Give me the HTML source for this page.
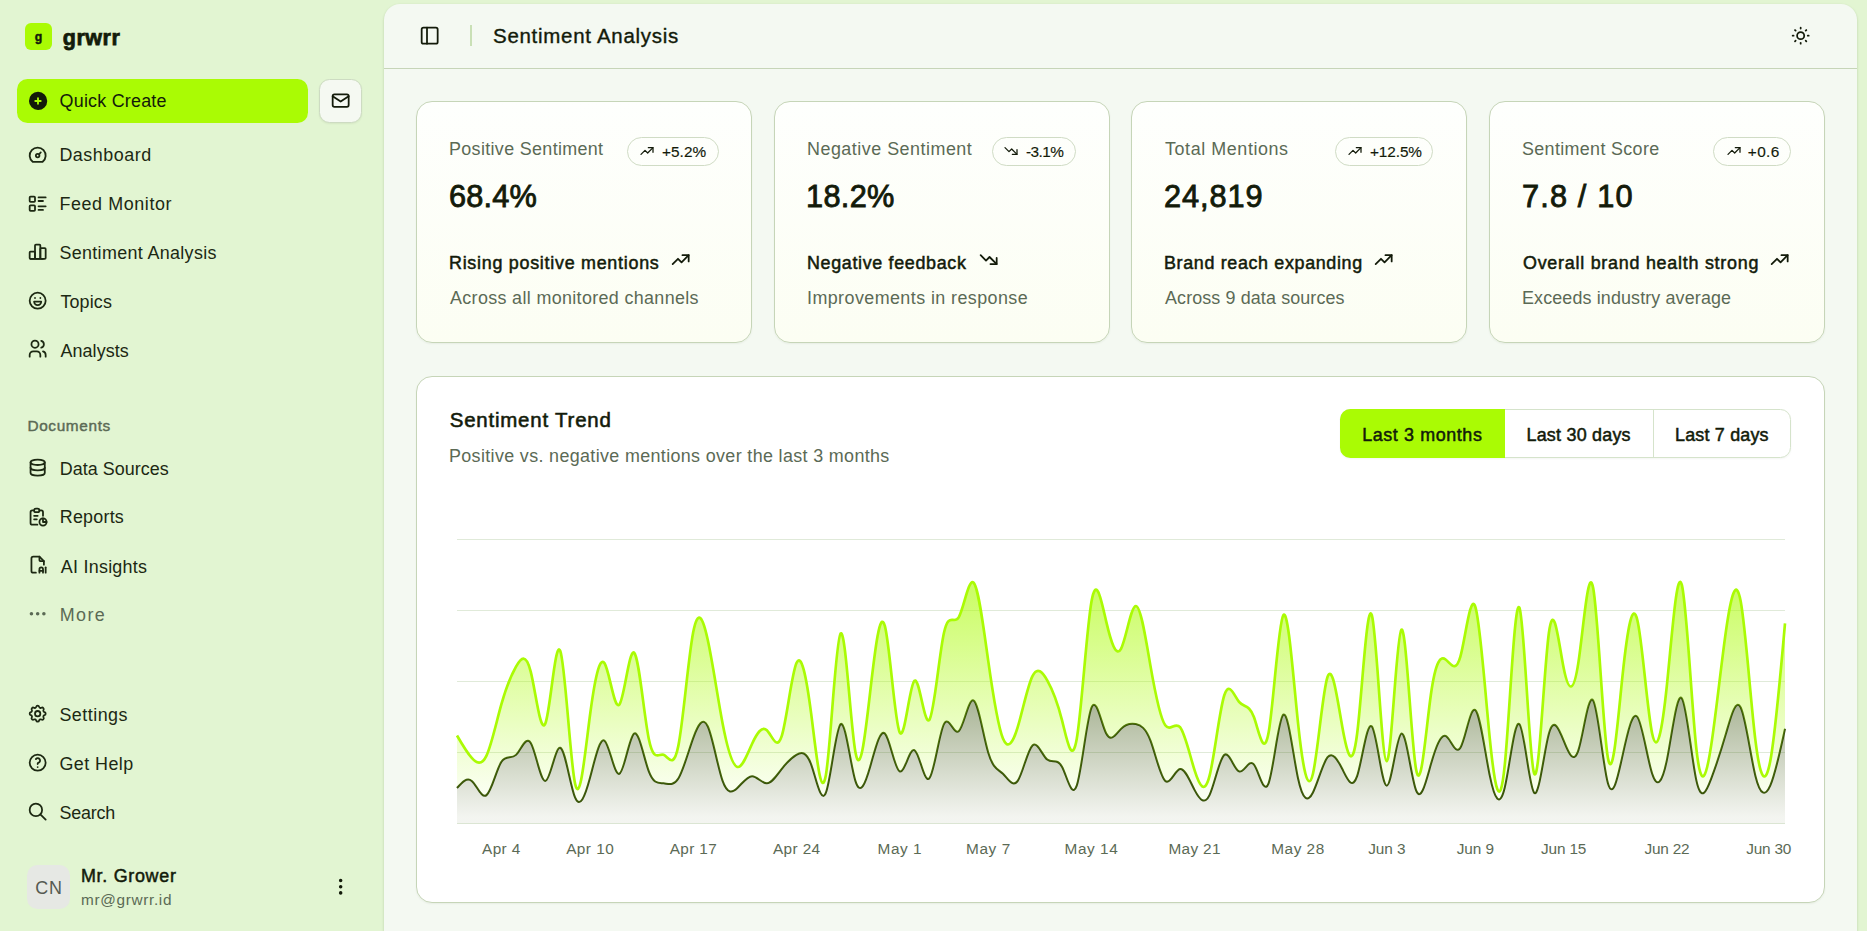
<!DOCTYPE html>
<html lang="en"><head><meta charset="utf-8"><title>grwrr - Sentiment Analysis</title>
<style>
html,body{margin:0;padding:0}
body{width:1867px;height:931px;overflow:hidden;position:relative;background:#e2f5d2;font-family:"Liberation Sans",sans-serif}
.t{position:absolute;white-space:nowrap}
.ic{position:absolute;overflow:visible}
</style></head><body>
<div style="position:absolute;left:384px;top:4px;width:1473px;height:960px;border-radius:16px;background:#f4f9f2;box-shadow:0 1px 3px rgba(40,60,20,.12),0 1px 2px rgba(40,60,20,.08)"></div>
<div style="position:absolute;left:384px;top:68px;width:1473px;height:1px;background:#c6d5b8"></div>
<div style="position:absolute;left:470px;top:25px;width:2px;height:21px;background:#c9e0b6"></div>
<div style="position:absolute;left:25px;top:23px;width:27px;height:27px;border-radius:6px;background:#aafb04"></div>
<div style="position:absolute;left:17px;top:79px;width:291px;height:44px;border-radius:10.5px;background:#aafb04"></div>
<div style="position:absolute;left:319px;top:79px;width:43px;height:44px;box-sizing:border-box;border-radius:10.5px;background:#f5f9f2;border:1px solid #cddbc2;box-shadow:0 1px 2px rgba(40,60,20,.07)"></div>
<div style="position:absolute;left:27px;top:865px;width:43px;height:43.5px;border-radius:10.5px;background:#e6e8e4"></div>
<div style="position:absolute;left:416px;top:101px;width:336px;height:242px;box-sizing:border-box;border-radius:16px;border:1px solid #c6d5b8;background:linear-gradient(to top,#fcfef3,#fefffd);box-shadow:0 1px 2px rgba(40,60,20,.06)"></div>
<div style="position:absolute;left:627.0px;top:137px;width:91.5px;height:29px;box-sizing:border-box;border-radius:15px;border:1px solid #d0dcc5"></div>
<div style="position:absolute;left:774px;top:101px;width:336px;height:242px;box-sizing:border-box;border-radius:16px;border:1px solid #c6d5b8;background:linear-gradient(to top,#fcfef3,#fefffd);box-shadow:0 1px 2px rgba(40,60,20,.06)"></div>
<div style="position:absolute;left:992.3px;top:137px;width:84.2px;height:29px;box-sizing:border-box;border-radius:15px;border:1px solid #d0dcc5"></div>
<div style="position:absolute;left:1131px;top:101px;width:336px;height:242px;box-sizing:border-box;border-radius:16px;border:1px solid #c6d5b8;background:linear-gradient(to top,#fcfef3,#fefffd);box-shadow:0 1px 2px rgba(40,60,20,.06)"></div>
<div style="position:absolute;left:1335.2px;top:137px;width:98.3px;height:29px;box-sizing:border-box;border-radius:15px;border:1px solid #d0dcc5"></div>
<div style="position:absolute;left:1489px;top:101px;width:336px;height:242px;box-sizing:border-box;border-radius:16px;border:1px solid #c6d5b8;background:linear-gradient(to top,#fcfef3,#fefffd);box-shadow:0 1px 2px rgba(40,60,20,.06)"></div>
<div style="position:absolute;left:1713.2px;top:137px;width:78.3px;height:29px;box-sizing:border-box;border-radius:15px;border:1px solid #d0dcc5"></div>
<div style="position:absolute;left:416px;top:376px;width:1409px;height:527px;box-sizing:border-box;border-radius:16px;border:1px solid #c6d5b8;background:#ffffff;box-shadow:0 1px 2px rgba(40,60,20,.06)"></div>
<div style="position:absolute;left:1340px;top:409px;width:451px;height:49px;box-sizing:border-box;border-radius:10.5px;border:1px solid #d5e3cb;box-shadow:0 1px 2px rgba(40,60,20,.05)"></div>
<div style="position:absolute;left:1340px;top:409px;width:164.5px;height:49px;border-radius:10.5px 0 0 10.5px;background:#aafb04"></div>
<div style="position:absolute;left:1653px;top:410px;width:1px;height:47px;background:#d5e3cb"></div>
<svg class="ic" style="left:0;top:0" width="1867" height="931" viewBox="0 0 1867 931">
<defs>
<linearGradient id="gp" x1="0" y1="0" x2="0" y2="1"><stop offset="5%" stop-color="#aafb04" stop-opacity="1"/><stop offset="95%" stop-color="#aafb04" stop-opacity="0.1"/></linearGradient>
<linearGradient id="gn" x1="0" y1="0" x2="0" y2="1"><stop offset="5%" stop-color="#38520a" stop-opacity="0.7"/><stop offset="95%" stop-color="#38520a" stop-opacity="0.1"/></linearGradient>
</defs>
<g><line x1="457" x2="1785" y1="539.50" y2="539.50" stroke="#e0ead9" stroke-width="1"/><line x1="457" x2="1785" y1="610.50" y2="610.50" stroke="#e0ead9" stroke-width="1"/><line x1="457" x2="1785" y1="681.50" y2="681.50" stroke="#e0ead9" stroke-width="1"/><line x1="457" x2="1785" y1="752.50" y2="752.50" stroke="#e0ead9" stroke-width="1"/><line x1="457" x2="1785" y1="823.50" y2="823.50" stroke="#e0ead9" stroke-width="1"/></g>
<path d="M457,788C461.92,782.39,466.84,776.78,471.76,780.9C476.67,785.02,481.59,798.88,486.51,795.1C491.43,791.32,496.35,769.89,501.27,761.97C506.19,754.04,511.1,759.62,516.02,754.87C520.94,750.12,525.86,735.04,530.78,743.03C535.7,751.02,540.61,782.08,545.53,780.9C550.45,779.72,555.37,746.29,560.29,747.77C565.21,749.24,570.13,785.61,575.04,797.47C579.96,809.32,584.88,796.65,589.8,778.53C594.72,760.42,599.64,736.85,604.56,740.67C609.47,744.48,614.39,775.68,619.31,773.8C624.23,771.92,629.15,736.98,634.07,733.57C638.99,730.15,643.9,758.27,648.82,771.43C653.74,784.59,658.66,782.8,663.58,783.27C668.5,783.74,673.41,786.47,678.33,778.53C683.25,770.59,688.17,751.98,693.09,738.3C698.01,724.62,702.93,715.87,707.84,726.47C712.76,737.06,717.68,767,722.6,780.9C727.52,794.8,732.44,792.67,737.36,788C742.27,783.33,747.19,776.13,752.11,776.17C757.03,776.2,761.95,783.47,766.87,783.27C771.79,783.06,776.7,775.38,781.62,769.07C786.54,762.75,791.46,757.8,796.38,754.87C801.3,751.94,806.21,751.03,811.13,764.33C816.05,777.64,820.97,805.16,825.89,792.73C830.81,780.3,835.73,727.91,840.64,724.1C845.56,720.29,850.48,765.04,855.4,780.9C860.32,796.76,865.24,783.71,870.16,766.7C875.07,749.69,879.99,728.72,884.91,733.57C889.83,738.42,894.75,769.1,899.67,771.43C904.59,773.77,909.5,747.77,914.42,750.13C919.34,752.5,924.26,783.22,929.18,778.53C934.1,773.85,939.01,733.75,943.93,724.1C948.85,714.45,953.77,735.25,958.69,731.2C963.61,727.15,968.53,698.25,973.44,700.43C978.36,702.62,983.28,735.89,988.2,752.5C993.12,769.11,998.04,769.07,1002.96,773.8C1007.87,778.53,1012.79,788.03,1017.71,780.9C1022.63,773.77,1027.55,750,1032.47,745.4C1037.39,740.8,1042.3,755.37,1047.22,759.6C1052.14,763.83,1057.06,757.73,1061.98,766.7C1066.9,775.67,1071.81,799.69,1076.73,785.63C1081.65,771.57,1086.57,719.42,1091.49,707.53C1096.41,695.65,1101.33,724.02,1106.24,733.57C1111.16,743.11,1116.08,733.83,1121,728.83C1125.92,723.84,1130.84,723.12,1135.76,724.1C1140.67,725.08,1145.59,727.74,1150.51,740.67C1155.43,753.59,1160.35,776.78,1165.27,780.9C1170.19,785.02,1175.1,770.06,1180.02,769.07C1184.94,768.07,1189.86,781.05,1194.78,790.37C1199.7,799.68,1204.61,805.35,1209.53,795.1C1214.45,784.85,1219.37,758.69,1224.29,754.87C1229.21,751.04,1234.13,769.54,1239.04,771.43C1243.96,773.33,1248.88,758.61,1253.8,764.33C1258.72,770.05,1263.64,796.21,1268.56,783.27C1273.47,770.32,1278.39,718.29,1283.31,714.63C1288.23,710.98,1293.15,755.71,1298.07,778.53C1302.99,801.35,1307.9,802.26,1312.82,792.73C1317.74,783.2,1322.66,763.24,1327.58,757.23C1332.5,751.23,1337.41,759.19,1342.33,769.07C1347.25,778.94,1352.17,790.73,1357.09,776.17C1362.01,761.6,1366.93,720.68,1371.84,726.47C1376.76,732.26,1381.68,784.76,1386.6,785.63C1391.52,786.5,1396.44,735.74,1401.36,733.57C1406.27,731.39,1411.19,777.81,1416.11,790.37C1421.03,802.92,1425.95,781.61,1430.87,764.33C1435.79,747.05,1440.7,733.8,1445.62,735.93C1450.54,738.07,1455.46,755.58,1460.38,747.77C1465.3,739.95,1470.21,706.79,1475.13,709.9C1480.05,713.01,1484.97,752.37,1489.89,776.17C1494.81,799.96,1499.73,808.18,1504.64,788C1509.56,767.82,1514.48,719.25,1519.4,724.1C1524.32,728.95,1529.24,787.21,1534.16,792.73C1539.07,798.25,1543.99,751.03,1548.91,733.57C1553.83,716.1,1558.75,728.39,1563.67,740.67C1568.59,752.94,1573.5,765.19,1578.42,750.13C1583.34,735.08,1588.26,692.71,1593.18,700.43C1598.1,708.15,1603.01,765.95,1607.93,783.27C1612.85,800.58,1617.77,777.41,1622.69,754.87C1627.61,732.32,1632.53,710.39,1637.44,717C1642.36,723.61,1647.28,758.76,1652.2,773.8C1657.12,788.84,1662.04,783.77,1666.96,759.6C1671.87,735.43,1676.79,692.18,1681.71,698.07C1686.63,703.95,1691.55,758.99,1696.47,780.9C1701.39,802.81,1706.3,791.6,1711.22,778.53C1716.14,765.46,1721.06,750.53,1725.98,733.57C1730.9,716.6,1735.81,697.59,1740.73,707.53C1745.65,717.47,1750.57,756.36,1755.49,776.17C1760.41,795.97,1765.33,796.7,1770.24,785.63C1775.16,774.56,1780.08,751.7,1785,728.83L1785,823.5L457,823.5Z" fill="url(#gn)" fill-opacity="0.6"/>
<path d="M457,788C461.92,782.39,466.84,776.78,471.76,780.9C476.67,785.02,481.59,798.88,486.51,795.1C491.43,791.32,496.35,769.89,501.27,761.97C506.19,754.04,511.1,759.62,516.02,754.87C520.94,750.12,525.86,735.04,530.78,743.03C535.7,751.02,540.61,782.08,545.53,780.9C550.45,779.72,555.37,746.29,560.29,747.77C565.21,749.24,570.13,785.61,575.04,797.47C579.96,809.32,584.88,796.65,589.8,778.53C594.72,760.42,599.64,736.85,604.56,740.67C609.47,744.48,614.39,775.68,619.31,773.8C624.23,771.92,629.15,736.98,634.07,733.57C638.99,730.15,643.9,758.27,648.82,771.43C653.74,784.59,658.66,782.8,663.58,783.27C668.5,783.74,673.41,786.47,678.33,778.53C683.25,770.59,688.17,751.98,693.09,738.3C698.01,724.62,702.93,715.87,707.84,726.47C712.76,737.06,717.68,767,722.6,780.9C727.52,794.8,732.44,792.67,737.36,788C742.27,783.33,747.19,776.13,752.11,776.17C757.03,776.2,761.95,783.47,766.87,783.27C771.79,783.06,776.7,775.38,781.62,769.07C786.54,762.75,791.46,757.8,796.38,754.87C801.3,751.94,806.21,751.03,811.13,764.33C816.05,777.64,820.97,805.16,825.89,792.73C830.81,780.3,835.73,727.91,840.64,724.1C845.56,720.29,850.48,765.04,855.4,780.9C860.32,796.76,865.24,783.71,870.16,766.7C875.07,749.69,879.99,728.72,884.91,733.57C889.83,738.42,894.75,769.1,899.67,771.43C904.59,773.77,909.5,747.77,914.42,750.13C919.34,752.5,924.26,783.22,929.18,778.53C934.1,773.85,939.01,733.75,943.93,724.1C948.85,714.45,953.77,735.25,958.69,731.2C963.61,727.15,968.53,698.25,973.44,700.43C978.36,702.62,983.28,735.89,988.2,752.5C993.12,769.11,998.04,769.07,1002.96,773.8C1007.87,778.53,1012.79,788.03,1017.71,780.9C1022.63,773.77,1027.55,750,1032.47,745.4C1037.39,740.8,1042.3,755.37,1047.22,759.6C1052.14,763.83,1057.06,757.73,1061.98,766.7C1066.9,775.67,1071.81,799.69,1076.73,785.63C1081.65,771.57,1086.57,719.42,1091.49,707.53C1096.41,695.65,1101.33,724.02,1106.24,733.57C1111.16,743.11,1116.08,733.83,1121,728.83C1125.92,723.84,1130.84,723.12,1135.76,724.1C1140.67,725.08,1145.59,727.74,1150.51,740.67C1155.43,753.59,1160.35,776.78,1165.27,780.9C1170.19,785.02,1175.1,770.06,1180.02,769.07C1184.94,768.07,1189.86,781.05,1194.78,790.37C1199.7,799.68,1204.61,805.35,1209.53,795.1C1214.45,784.85,1219.37,758.69,1224.29,754.87C1229.21,751.04,1234.13,769.54,1239.04,771.43C1243.96,773.33,1248.88,758.61,1253.8,764.33C1258.72,770.05,1263.64,796.21,1268.56,783.27C1273.47,770.32,1278.39,718.29,1283.31,714.63C1288.23,710.98,1293.15,755.71,1298.07,778.53C1302.99,801.35,1307.9,802.26,1312.82,792.73C1317.74,783.2,1322.66,763.24,1327.58,757.23C1332.5,751.23,1337.41,759.19,1342.33,769.07C1347.25,778.94,1352.17,790.73,1357.09,776.17C1362.01,761.6,1366.93,720.68,1371.84,726.47C1376.76,732.26,1381.68,784.76,1386.6,785.63C1391.52,786.5,1396.44,735.74,1401.36,733.57C1406.27,731.39,1411.19,777.81,1416.11,790.37C1421.03,802.92,1425.95,781.61,1430.87,764.33C1435.79,747.05,1440.7,733.8,1445.62,735.93C1450.54,738.07,1455.46,755.58,1460.38,747.77C1465.3,739.95,1470.21,706.79,1475.13,709.9C1480.05,713.01,1484.97,752.37,1489.89,776.17C1494.81,799.96,1499.73,808.18,1504.64,788C1509.56,767.82,1514.48,719.25,1519.4,724.1C1524.32,728.95,1529.24,787.21,1534.16,792.73C1539.07,798.25,1543.99,751.03,1548.91,733.57C1553.83,716.1,1558.75,728.39,1563.67,740.67C1568.59,752.94,1573.5,765.19,1578.42,750.13C1583.34,735.08,1588.26,692.71,1593.18,700.43C1598.1,708.15,1603.01,765.95,1607.93,783.27C1612.85,800.58,1617.77,777.41,1622.69,754.87C1627.61,732.32,1632.53,710.39,1637.44,717C1642.36,723.61,1647.28,758.76,1652.2,773.8C1657.12,788.84,1662.04,783.77,1666.96,759.6C1671.87,735.43,1676.79,692.18,1681.71,698.07C1686.63,703.95,1691.55,758.99,1696.47,780.9C1701.39,802.81,1706.3,791.6,1711.22,778.53C1716.14,765.46,1721.06,750.53,1725.98,733.57C1730.9,716.6,1735.81,697.59,1740.73,707.53C1745.65,717.47,1750.57,756.36,1755.49,776.17C1760.41,795.97,1765.33,796.7,1770.24,785.63C1775.16,774.56,1780.08,751.7,1785,728.83" fill="none" stroke="#38520a" stroke-width="2"/>
<path d="M457,735.46C461.92,743.96,466.84,752.46,471.76,757.94C476.67,763.43,481.59,765.89,486.51,755.58C491.43,745.26,496.35,722.17,501.27,704.69C506.19,687.21,511.1,675.34,516.02,666.59C520.94,657.84,525.86,652.2,530.78,671.8C535.7,691.39,540.61,736.22,545.53,722.92C550.45,709.61,555.37,638.16,560.29,650.97C565.21,663.78,570.13,760.84,575.04,783.5C579.96,806.17,584.88,754.44,589.8,716.76C594.72,679.09,599.64,655.48,604.56,663.28C609.47,671.08,614.39,710.29,619.31,704.69C624.23,699.09,629.15,648.68,634.07,652.63C638.99,656.58,643.9,714.89,648.82,739.01C653.74,763.13,658.66,753.06,663.58,754.87C668.5,756.68,673.41,770.37,678.33,745.87C683.25,721.38,688.17,658.7,693.09,632.75C698.01,606.8,702.93,617.58,707.84,640.32C712.76,663.06,717.68,697.76,722.6,723.39C727.52,749.02,732.44,765.59,737.36,766.94C742.27,768.28,747.19,754.4,752.11,743.74C757.03,733.09,761.95,725.67,766.87,730.25C771.79,734.84,776.7,751.44,781.62,736.41C786.54,721.37,791.46,674.71,796.38,663.28C801.3,651.84,806.21,675.64,811.13,713.45C816.05,751.26,820.97,803.09,825.89,774.98C830.81,746.88,835.73,638.84,840.64,633.46C845.56,628.07,850.48,725.33,855.4,752.03C860.32,778.72,865.24,734.85,870.16,692.15C875.07,649.45,879.99,607.94,884.91,626.12C889.83,644.3,894.75,722.19,899.67,732.38C904.59,742.58,909.5,685.09,914.42,680.79C919.34,676.49,924.26,725.37,929.18,720.08C934.1,714.79,939.01,655.33,943.93,632.98C948.85,610.64,953.77,625.4,958.69,617.36C963.61,609.33,968.53,578.48,973.44,582.57C978.36,586.66,983.28,625.68,988.2,660.67C993.12,695.66,998.04,726.62,1002.96,738.54C1007.87,750.45,1012.79,743.32,1017.71,727.18C1022.63,711.04,1027.55,685.89,1032.47,676.06C1037.39,666.22,1042.3,671.71,1047.22,680.32C1052.14,688.93,1057.06,700.66,1061.98,720.08C1066.9,739.49,1071.81,766.58,1076.73,739.01C1081.65,711.44,1086.57,629.22,1091.49,601.51C1096.41,573.8,1101.33,600.6,1106.24,621.62C1111.16,642.64,1116.08,657.88,1121,648.84C1125.92,639.8,1130.84,606.49,1135.76,606C1140.67,605.52,1145.59,637.86,1150.51,666.12C1155.43,694.37,1160.35,718.55,1165.27,725.28C1170.19,732.02,1175.1,721.31,1180.02,727.18C1184.94,733.05,1189.86,755.49,1194.78,770.96C1199.7,786.43,1204.61,794.91,1209.53,775.93C1214.45,756.95,1219.37,710.49,1224.29,695.23C1229.21,679.96,1234.13,695.89,1239.04,701.85C1243.96,707.81,1248.88,703.8,1253.8,716.76C1258.72,729.72,1263.64,759.65,1268.56,732.86C1273.47,706.06,1278.39,622.54,1283.31,615.23C1288.23,607.93,1293.15,676.84,1298.07,723.39C1302.99,769.94,1307.9,794.13,1312.82,774.27C1317.74,754.41,1322.66,690.5,1327.58,676.77C1332.5,663.03,1337.41,699.47,1342.33,726.94C1347.25,754.41,1352.17,772.92,1357.09,734.04C1362.01,695.16,1366.93,598.88,1371.84,615.23C1376.76,631.59,1381.68,760.58,1386.6,761.26C1391.52,761.94,1396.44,634.31,1401.36,629.67C1406.27,625.03,1411.19,743.37,1416.11,769.54C1421.03,795.71,1425.95,729.7,1430.87,694.75C1435.79,659.81,1440.7,655.92,1445.62,659.49C1450.54,663.06,1455.46,674.07,1460.38,656.65C1465.3,639.23,1470.21,593.36,1475.13,606.24C1480.05,619.12,1484.97,690.76,1489.89,739.48C1494.81,788.21,1499.73,814.03,1504.64,766.23C1509.56,718.43,1514.48,597,1519.4,607.66C1524.32,618.32,1529.24,761.05,1534.16,773.56C1539.07,786.08,1543.99,668.36,1548.91,632.75C1553.83,597.13,1558.75,643.6,1563.67,668.01C1568.59,692.42,1573.5,694.76,1578.42,662.33C1583.34,629.9,1588.26,562.7,1593.18,588.02C1598.1,613.33,1603.01,731.17,1607.93,757.94C1612.85,784.72,1617.77,720.44,1622.69,674.16C1627.61,627.89,1632.53,599.62,1637.44,620.44C1642.36,641.26,1647.28,711.15,1652.2,733.8C1657.12,756.45,1662.04,731.85,1666.96,684.58C1671.87,637.3,1676.79,567.36,1681.71,584.47C1686.63,601.58,1691.55,705.75,1696.47,749.66C1701.39,793.57,1706.3,777.23,1711.22,745.16C1716.14,713.1,1721.06,665.3,1725.98,630.85C1730.9,596.41,1735.81,575.31,1740.73,601.51C1745.65,627.71,1750.57,701.21,1755.49,740.9C1760.41,780.6,1765.33,786.49,1770.24,761.26C1775.16,736.02,1780.08,679.65,1785,623.28L1785,728.83C1780.08,751.7,1775.16,774.56,1770.24,785.63C1765.33,796.7,1760.41,795.97,1755.49,776.17C1750.57,756.36,1745.65,717.47,1740.73,707.53C1735.81,697.59,1730.9,716.6,1725.98,733.57C1721.06,750.53,1716.14,765.46,1711.22,778.53C1706.3,791.6,1701.39,802.81,1696.47,780.9C1691.55,758.99,1686.63,703.95,1681.71,698.07C1676.79,692.18,1671.87,735.43,1666.96,759.6C1662.04,783.77,1657.12,788.84,1652.2,773.8C1647.28,758.76,1642.36,723.61,1637.44,717C1632.53,710.39,1627.61,732.32,1622.69,754.87C1617.77,777.41,1612.85,800.58,1607.93,783.27C1603.01,765.95,1598.1,708.15,1593.18,700.43C1588.26,692.71,1583.34,735.08,1578.42,750.13C1573.5,765.19,1568.59,752.94,1563.67,740.67C1558.75,728.39,1553.83,716.1,1548.91,733.57C1543.99,751.03,1539.07,798.25,1534.16,792.73C1529.24,787.21,1524.32,728.95,1519.4,724.1C1514.48,719.25,1509.56,767.82,1504.64,788C1499.73,808.18,1494.81,799.96,1489.89,776.17C1484.97,752.37,1480.05,713.01,1475.13,709.9C1470.21,706.79,1465.3,739.95,1460.38,747.77C1455.46,755.58,1450.54,738.07,1445.62,735.93C1440.7,733.8,1435.79,747.05,1430.87,764.33C1425.95,781.61,1421.03,802.92,1416.11,790.37C1411.19,777.81,1406.27,731.39,1401.36,733.57C1396.44,735.74,1391.52,786.5,1386.6,785.63C1381.68,784.76,1376.76,732.26,1371.84,726.47C1366.93,720.68,1362.01,761.6,1357.09,776.17C1352.17,790.73,1347.25,778.94,1342.33,769.07C1337.41,759.19,1332.5,751.23,1327.58,757.23C1322.66,763.24,1317.74,783.2,1312.82,792.73C1307.9,802.26,1302.99,801.35,1298.07,778.53C1293.15,755.71,1288.23,710.98,1283.31,714.63C1278.39,718.29,1273.47,770.32,1268.56,783.27C1263.64,796.21,1258.72,770.05,1253.8,764.33C1248.88,758.61,1243.96,773.33,1239.04,771.43C1234.13,769.54,1229.21,751.04,1224.29,754.87C1219.37,758.69,1214.45,784.85,1209.53,795.1C1204.61,805.35,1199.7,799.68,1194.78,790.37C1189.86,781.05,1184.94,768.07,1180.02,769.07C1175.1,770.06,1170.19,785.02,1165.27,780.9C1160.35,776.78,1155.43,753.59,1150.51,740.67C1145.59,727.74,1140.67,725.08,1135.76,724.1C1130.84,723.12,1125.92,723.84,1121,728.83C1116.08,733.83,1111.16,743.11,1106.24,733.57C1101.33,724.02,1096.41,695.65,1091.49,707.53C1086.57,719.42,1081.65,771.57,1076.73,785.63C1071.81,799.69,1066.9,775.67,1061.98,766.7C1057.06,757.73,1052.14,763.83,1047.22,759.6C1042.3,755.37,1037.39,740.8,1032.47,745.4C1027.55,750,1022.63,773.77,1017.71,780.9C1012.79,788.03,1007.87,778.53,1002.96,773.8C998.04,769.07,993.12,769.11,988.2,752.5C983.28,735.89,978.36,702.62,973.44,700.43C968.53,698.25,963.61,727.15,958.69,731.2C953.77,735.25,948.85,714.45,943.93,724.1C939.01,733.75,934.1,773.85,929.18,778.53C924.26,783.22,919.34,752.5,914.42,750.13C909.5,747.77,904.59,773.77,899.67,771.43C894.75,769.1,889.83,738.42,884.91,733.57C879.99,728.72,875.07,749.69,870.16,766.7C865.24,783.71,860.32,796.76,855.4,780.9C850.48,765.04,845.56,720.29,840.64,724.1C835.73,727.91,830.81,780.3,825.89,792.73C820.97,805.16,816.05,777.64,811.13,764.33C806.21,751.03,801.3,751.94,796.38,754.87C791.46,757.8,786.54,762.75,781.62,769.07C776.7,775.38,771.79,783.06,766.87,783.27C761.95,783.47,757.03,776.2,752.11,776.17C747.19,776.13,742.27,783.33,737.36,788C732.44,792.67,727.52,794.8,722.6,780.9C717.68,767,712.76,737.06,707.84,726.47C702.93,715.87,698.01,724.62,693.09,738.3C688.17,751.98,683.25,770.59,678.33,778.53C673.41,786.47,668.5,783.74,663.58,783.27C658.66,782.8,653.74,784.59,648.82,771.43C643.9,758.27,638.99,730.15,634.07,733.57C629.15,736.98,624.23,771.92,619.31,773.8C614.39,775.68,609.47,744.48,604.56,740.67C599.64,736.85,594.72,760.42,589.8,778.53C584.88,796.65,579.96,809.32,575.04,797.47C570.13,785.61,565.21,749.24,560.29,747.77C555.37,746.29,550.45,779.72,545.53,780.9C540.61,782.08,535.7,751.02,530.78,743.03C525.86,735.04,520.94,750.12,516.02,754.87C511.1,759.62,506.19,754.04,501.27,761.97C496.35,769.89,491.43,791.32,486.51,795.1C481.59,798.88,476.67,785.02,471.76,780.9C466.84,776.78,461.92,782.39,457,788Z" fill="url(#gp)" fill-opacity="0.6"/>
<path d="M457,735.46C461.92,743.96,466.84,752.46,471.76,757.94C476.67,763.43,481.59,765.89,486.51,755.58C491.43,745.26,496.35,722.17,501.27,704.69C506.19,687.21,511.1,675.34,516.02,666.59C520.94,657.84,525.86,652.2,530.78,671.8C535.7,691.39,540.61,736.22,545.53,722.92C550.45,709.61,555.37,638.16,560.29,650.97C565.21,663.78,570.13,760.84,575.04,783.5C579.96,806.17,584.88,754.44,589.8,716.76C594.72,679.09,599.64,655.48,604.56,663.28C609.47,671.08,614.39,710.29,619.31,704.69C624.23,699.09,629.15,648.68,634.07,652.63C638.99,656.58,643.9,714.89,648.82,739.01C653.74,763.13,658.66,753.06,663.58,754.87C668.5,756.68,673.41,770.37,678.33,745.87C683.25,721.38,688.17,658.7,693.09,632.75C698.01,606.8,702.93,617.58,707.84,640.32C712.76,663.06,717.68,697.76,722.6,723.39C727.52,749.02,732.44,765.59,737.36,766.94C742.27,768.28,747.19,754.4,752.11,743.74C757.03,733.09,761.95,725.67,766.87,730.25C771.79,734.84,776.7,751.44,781.62,736.41C786.54,721.37,791.46,674.71,796.38,663.28C801.3,651.84,806.21,675.64,811.13,713.45C816.05,751.26,820.97,803.09,825.89,774.98C830.81,746.88,835.73,638.84,840.64,633.46C845.56,628.07,850.48,725.33,855.4,752.03C860.32,778.72,865.24,734.85,870.16,692.15C875.07,649.45,879.99,607.94,884.91,626.12C889.83,644.3,894.75,722.19,899.67,732.38C904.59,742.58,909.5,685.09,914.42,680.79C919.34,676.49,924.26,725.37,929.18,720.08C934.1,714.79,939.01,655.33,943.93,632.98C948.85,610.64,953.77,625.4,958.69,617.36C963.61,609.33,968.53,578.48,973.44,582.57C978.36,586.66,983.28,625.68,988.2,660.67C993.12,695.66,998.04,726.62,1002.96,738.54C1007.87,750.45,1012.79,743.32,1017.71,727.18C1022.63,711.04,1027.55,685.89,1032.47,676.06C1037.39,666.22,1042.3,671.71,1047.22,680.32C1052.14,688.93,1057.06,700.66,1061.98,720.08C1066.9,739.49,1071.81,766.58,1076.73,739.01C1081.65,711.44,1086.57,629.22,1091.49,601.51C1096.41,573.8,1101.33,600.6,1106.24,621.62C1111.16,642.64,1116.08,657.88,1121,648.84C1125.92,639.8,1130.84,606.49,1135.76,606C1140.67,605.52,1145.59,637.86,1150.51,666.12C1155.43,694.37,1160.35,718.55,1165.27,725.28C1170.19,732.02,1175.1,721.31,1180.02,727.18C1184.94,733.05,1189.86,755.49,1194.78,770.96C1199.7,786.43,1204.61,794.91,1209.53,775.93C1214.45,756.95,1219.37,710.49,1224.29,695.23C1229.21,679.96,1234.13,695.89,1239.04,701.85C1243.96,707.81,1248.88,703.8,1253.8,716.76C1258.72,729.72,1263.64,759.65,1268.56,732.86C1273.47,706.06,1278.39,622.54,1283.31,615.23C1288.23,607.93,1293.15,676.84,1298.07,723.39C1302.99,769.94,1307.9,794.13,1312.82,774.27C1317.74,754.41,1322.66,690.5,1327.58,676.77C1332.5,663.03,1337.41,699.47,1342.33,726.94C1347.25,754.41,1352.17,772.92,1357.09,734.04C1362.01,695.16,1366.93,598.88,1371.84,615.23C1376.76,631.59,1381.68,760.58,1386.6,761.26C1391.52,761.94,1396.44,634.31,1401.36,629.67C1406.27,625.03,1411.19,743.37,1416.11,769.54C1421.03,795.71,1425.95,729.7,1430.87,694.75C1435.79,659.81,1440.7,655.92,1445.62,659.49C1450.54,663.06,1455.46,674.07,1460.38,656.65C1465.3,639.23,1470.21,593.36,1475.13,606.24C1480.05,619.12,1484.97,690.76,1489.89,739.48C1494.81,788.21,1499.73,814.03,1504.64,766.23C1509.56,718.43,1514.48,597,1519.4,607.66C1524.32,618.32,1529.24,761.05,1534.16,773.56C1539.07,786.08,1543.99,668.36,1548.91,632.75C1553.83,597.13,1558.75,643.6,1563.67,668.01C1568.59,692.42,1573.5,694.76,1578.42,662.33C1583.34,629.9,1588.26,562.7,1593.18,588.02C1598.1,613.33,1603.01,731.17,1607.93,757.94C1612.85,784.72,1617.77,720.44,1622.69,674.16C1627.61,627.89,1632.53,599.62,1637.44,620.44C1642.36,641.26,1647.28,711.15,1652.2,733.8C1657.12,756.45,1662.04,731.85,1666.96,684.58C1671.87,637.3,1676.79,567.36,1681.71,584.47C1686.63,601.58,1691.55,705.75,1696.47,749.66C1701.39,793.57,1706.3,777.23,1711.22,745.16C1716.14,713.1,1721.06,665.3,1725.98,630.85C1730.9,596.41,1735.81,575.31,1740.73,601.51C1745.65,627.71,1750.57,701.21,1755.49,740.9C1760.41,780.6,1765.33,786.49,1770.24,761.26C1775.16,736.02,1780.08,679.65,1785,623.28" fill="none" stroke="#aafb04" stroke-width="2.67"/>
</svg>
<svg class="ic" style="left:27.00px;top:90.00px" width="22.00" height="22.00" viewBox="0 0 24 24" fill="#131b0a" stroke="none"><path d="M4.929 4.929a10 10 0 1 1 14.141 14.141a10 10 0 0 1 -14.14 -14.14zm8.071 4.071a1 1 0 1 0 -2 0v2h-2a1 1 0 1 0 0 2h2v2a1 1 0 1 0 2 0v-2h2a1 1 0 1 0 0 -2h-2v-2z"/></svg>
<svg class="ic" style="left:329.83px;top:90.34px" width="21.33" height="21.33" viewBox="0 0 24 24" fill="none" stroke="#131b0a" stroke-width="2" stroke-linecap="round" stroke-linejoin="round"><path d="M3 7a2 2 0 0 1 2 -2h14a2 2 0 0 1 2 2v10a2 2 0 0 1 -2 2h-14a2 2 0 0 1 -2 -2v-10z"/><path d="M3 7l9 6l9 -6"/></svg>
<svg class="ic" style="left:27.23px;top:144.14px" width="21.33" height="21.33" viewBox="0 0 24 24" fill="none" stroke="#1c2812" stroke-width="2" stroke-linecap="round" stroke-linejoin="round"><path d="M12 13m-2 0a2 2 0 1 0 4 0a2 2 0 1 0 -4 0"/><path d="M13.45 11.55l2.05 -2.05"/><path d="M6.4 20a9 9 0 1 1 11.2 0z"/></svg>
<svg class="ic" style="left:27.23px;top:193.34px" width="21.33" height="21.33" viewBox="0 0 24 24" fill="none" stroke="#1c2812" stroke-width="2" stroke-linecap="round" stroke-linejoin="round"><path d="M13 5h8"/><path d="M13 9h5"/><path d="M13 15h8"/><path d="M13 19h5"/><path d="M3 5a1 1 0 0 1 1 -1h4a1 1 0 0 1 1 1v4a1 1 0 0 1 -1 1h-4a1 1 0 0 1 -1 -1z"/><path d="M3 15a1 1 0 0 1 1 -1h4a1 1 0 0 1 1 1v4a1 1 0 0 1 -1 1h-4a1 1 0 0 1 -1 -1z"/></svg>
<svg class="ic" style="left:27.23px;top:241.34px" width="21.33" height="21.33" viewBox="0 0 24 24" fill="none" stroke="#1c2812" stroke-width="2" stroke-linecap="round" stroke-linejoin="round"><path d="M3 13a1 1 0 0 1 1 -1h4a1 1 0 0 1 1 1v6a1 1 0 0 1 -1 1h-4a1 1 0 0 1 -1 -1z"/><path d="M15 9a1 1 0 0 1 1 -1h4a1 1 0 0 1 1 1v10a1 1 0 0 1 -1 1h-4a1 1 0 0 1 -1 -1z"/><path d="M9 5a1 1 0 0 1 1 -1h4a1 1 0 0 1 1 1v14a1 1 0 0 1 -1 1h-4a1 1 0 0 1 -1 -1z"/><path d="M4 20h14"/></svg>
<svg class="ic" style="left:27.23px;top:290.23px" width="21.33" height="21.33" viewBox="0 0 24 24" fill="none" stroke="#1c2812" stroke-width="2" stroke-linecap="round" stroke-linejoin="round"><path d="M12 12m-9 0a9 9 0 1 0 18 0a9 9 0 1 0 -18 0"/><path d="M9 9l.01 0"/><path d="M15 9l.01 0"/><path d="M8 13a4 4 0 1 0 8 0h-8"/></svg>
<svg class="ic" style="left:27.23px;top:338.03px" width="21.33" height="21.33" viewBox="0 0 24 24" fill="none" stroke="#1c2812" stroke-width="2" stroke-linecap="round" stroke-linejoin="round"><path d="M9 7m-4 0a4 4 0 1 0 8 0a4 4 0 1 0 -8 0"/><path d="M3 21v-2a4 4 0 0 1 4 -4h4a4 4 0 0 1 4 4v2"/><path d="M16 3.13a4 4 0 0 1 0 7.75"/><path d="M21 21v-2a4 4 0 0 0 -3 -3.85"/></svg>
<svg class="ic" style="left:27.23px;top:457.03px" width="21.33" height="21.33" viewBox="0 0 24 24" fill="none" stroke="#1c2812" stroke-width="2" stroke-linecap="round" stroke-linejoin="round"><path d="M12 6m-8 0a8 3 0 1 0 16 0a8 3 0 1 0 -16 0"/><path d="M4 6v6a8 3 0 0 0 16 0v-6"/><path d="M4 12v6a8 3 0 0 0 16 0v-6"/></svg>
<svg class="ic" style="left:27.23px;top:506.33px" width="21.33" height="21.33" viewBox="0 0 24 24" fill="none" stroke="#1c2812" stroke-width="2" stroke-linecap="round" stroke-linejoin="round"><path d="M8 5h-2a2 2 0 0 0 -2 2v12a2 2 0 0 0 2 2h5.697"/><path d="M18 14v4h4"/><path d="M18 11v-4a2 2 0 0 0 -2 -2h-2"/><path d="M8 5a2 2 0 0 1 2 -2h2a2 2 0 0 1 2 2a2 2 0 0 1 -2 2h-2a2 2 0 0 1 -2 -2z"/><path d="M18 18m-4 0a4 4 0 1 0 8 0a4 4 0 1 0 -8 0"/><path d="M8 11h4"/><path d="M8 15h3"/></svg>
<svg class="ic" style="left:27.23px;top:554.34px" width="21.33" height="21.33" viewBox="0 0 24 24" fill="none" stroke="#1c2812" stroke-width="2" stroke-linecap="round" stroke-linejoin="round"><path d="M14 3v4a1 1 0 0 0 1 1h4"/><path d="M10 21h-3a2 2 0 0 1 -2 -2v-14a2 2 0 0 1 2 -2h7l5 5v4"/><path d="M14 21v-4a2 2 0 1 1 4 0v4"/><path d="M14 19h4"/><path d="M21 15v6"/></svg>
<svg class="ic" style="left:27.23px;top:602.74px" width="21.33" height="21.33" viewBox="0 0 24 24" fill="none" stroke="#5b6a55" stroke-width="2" stroke-linecap="round" stroke-linejoin="round"><path d="M5 12m-1 0a1 1 0 1 0 2 0a1 1 0 1 0 -2 0"/><path d="M12 12m-1 0a1 1 0 1 0 2 0a1 1 0 1 0 -2 0"/><path d="M19 12m-1 0a1 1 0 1 0 2 0a1 1 0 1 0 -2 0"/></svg>
<svg class="ic" style="left:27.23px;top:703.13px" width="21.33" height="21.33" viewBox="0 0 24 24" fill="none" stroke="#1c2812" stroke-width="2" stroke-linecap="round" stroke-linejoin="round"><path d="M10.325 4.317c.426 -1.756 2.924 -1.756 3.35 0a1.724 1.724 0 0 0 2.573 1.066c1.543 -.94 3.31 .826 2.37 2.37a1.724 1.724 0 0 0 1.065 2.572c1.756 .426 1.756 2.924 0 3.35a1.724 1.724 0 0 0 -1.066 2.573c.94 1.543 -.826 3.31 -2.37 2.37a1.724 1.724 0 0 0 -2.572 1.065c-.426 1.756 -2.924 1.756 -3.35 0a1.724 1.724 0 0 0 -2.573 -1.066c-1.543 .94 -3.31 -.826 -2.37 -2.37a1.724 1.724 0 0 0 -1.065 -2.572c-1.756 -.426 -1.756 -2.924 0 -3.35a1.724 1.724 0 0 0 1.066 -2.573c-.94 -1.543 .826 -3.31 2.37 -2.37c1 .608 2.296 .07 2.572 -1.065z"/><path d="M9 12a3 3 0 1 0 6 0a3 3 0 0 0 -6 0"/></svg>
<svg class="ic" style="left:27.23px;top:751.94px" width="21.33" height="21.33" viewBox="0 0 24 24" fill="none" stroke="#1c2812" stroke-width="2" stroke-linecap="round" stroke-linejoin="round"><path d="M12 12m-9 0a9 9 0 1 0 18 0a9 9 0 1 0 -18 0"/><path d="M12 17l0 .01"/><path d="M12 13.5a1.5 1.5 0 0 1 1 -1.5a2.6 2.6 0 1 0 -3 -4"/></svg>
<svg class="ic" style="left:27.23px;top:800.84px" width="21.33" height="21.33" viewBox="0 0 24 24" fill="none" stroke="#1c2812" stroke-width="2" stroke-linecap="round" stroke-linejoin="round"><path d="M10 10m-7 0a7 7 0 1 0 14 0a7 7 0 1 0 -14 0"/><path d="M21 21l-6 -6"/></svg>
<svg class="ic" style="left:330.03px;top:876.04px" width="21.33" height="21.33" viewBox="0 0 24 24" fill="none" stroke="#131b0a" stroke-width="2" stroke-linecap="round" stroke-linejoin="round"><path d="M12 12m-1 0a1 1 0 1 0 2 0a1 1 0 1 0 -2 0"/><path d="M12 19m-1 0a1 1 0 1 0 2 0a1 1 0 1 0 -2 0"/><path d="M12 5m-1 0a1 1 0 1 0 2 0a1 1 0 1 0 -2 0"/></svg>
<svg class="ic" style="left:419.03px;top:25.04px" width="21.33" height="21.33" viewBox="0 0 24 24" fill="none" stroke="#131b0a" stroke-width="2" stroke-linecap="round" stroke-linejoin="round"><rect width="18" height="18" x="3" y="3" rx="2"/><path d="M9 3v18"/></svg>
<svg class="ic" style="left:1790.13px;top:24.98px" width="21.33" height="21.33" viewBox="0 0 24 24" fill="none" stroke="#131b0a" stroke-width="2" stroke-linecap="round" stroke-linejoin="round"><circle cx="12" cy="12" r="4"/><path d="M12 3v1"/><path d="M12 20v1"/><path d="M3 12h1"/><path d="M20 12h1"/><path d="m18.364 5.636-.707.707"/><path d="m6.343 17.657-.707.707"/><path d="m5.636 5.636.707.707"/><path d="m17.657 17.657.707.707"/></svg>
<svg class="ic" style="left:639.00px;top:142.80px" width="16.00" height="16.00" viewBox="0 0 24 24" fill="none" stroke="#131b0a" stroke-width="1.9" stroke-linecap="round" stroke-linejoin="round"><path d="M3 17l6 -6l4 4l8 -8"/><path d="M14 7l7 0l0 7"/></svg>
<svg class="ic" style="left:670.34px;top:248.84px" width="21.33" height="21.33" viewBox="0 0 24 24" fill="none" stroke="#131b0a" stroke-width="2" stroke-linecap="round" stroke-linejoin="round"><path d="M3 17l6 -6l4 4l8 -8"/><path d="M14 7l7 0l0 7"/></svg>
<svg class="ic" style="left:1003.00px;top:142.80px" width="16.00" height="16.00" viewBox="0 0 24 24" fill="none" stroke="#131b0a" stroke-width="1.9" stroke-linecap="round" stroke-linejoin="round"><path d="M3 7l6 6l4 -4l8 8"/><path d="M21 10l0 7l-7 0"/></svg>
<svg class="ic" style="left:977.54px;top:248.84px" width="21.33" height="21.33" viewBox="0 0 24 24" fill="none" stroke="#131b0a" stroke-width="2" stroke-linecap="round" stroke-linejoin="round"><path d="M3 7l6 6l4 -4l8 8"/><path d="M21 10l0 7l-7 0"/></svg>
<svg class="ic" style="left:1347.00px;top:142.80px" width="16.00" height="16.00" viewBox="0 0 24 24" fill="none" stroke="#131b0a" stroke-width="1.9" stroke-linecap="round" stroke-linejoin="round"><path d="M3 17l6 -6l4 4l8 -8"/><path d="M14 7l7 0l0 7"/></svg>
<svg class="ic" style="left:1373.04px;top:248.84px" width="21.33" height="21.33" viewBox="0 0 24 24" fill="none" stroke="#131b0a" stroke-width="2" stroke-linecap="round" stroke-linejoin="round"><path d="M3 17l6 -6l4 4l8 -8"/><path d="M14 7l7 0l0 7"/></svg>
<svg class="ic" style="left:1725.50px;top:142.80px" width="16.00" height="16.00" viewBox="0 0 24 24" fill="none" stroke="#131b0a" stroke-width="1.9" stroke-linecap="round" stroke-linejoin="round"><path d="M3 17l6 -6l4 4l8 -8"/><path d="M14 7l7 0l0 7"/></svg>
<svg class="ic" style="left:1769.34px;top:248.84px" width="21.33" height="21.33" viewBox="0 0 24 24" fill="none" stroke="#131b0a" stroke-width="2" stroke-linecap="round" stroke-linejoin="round"><path d="M3 17l6 -6l4 4l8 -8"/><path d="M14 7l7 0l0 7"/></svg>
<div class="t" style="left:34.80px;top:30.00px;font-size:12.29px;line-height:14px;color:#131b0a;font-weight:700;-webkit-text-stroke:0.43px currentColor;">g</div>
<div class="t" style="left:62.80px;top:26.00px;font-size:21.5px;line-height:24px;color:#131b0a;font-weight:700;-webkit-text-stroke:0.75px currentColor;letter-spacing:0.500px;">grwrr</div>
<div class="t" style="left:59.60px;top:91.00px;font-size:17.92px;line-height:20px;color:#131b0a;font-weight:400;letter-spacing:0.218px;">Quick Create</div>
<div class="t" style="left:59.40px;top:145.00px;font-size:17.92px;line-height:20px;color:#1c2812;font-weight:400;letter-spacing:0.525px;">Dashboard</div>
<div class="t" style="left:59.40px;top:194.00px;font-size:17.92px;line-height:20px;color:#1c2812;font-weight:400;letter-spacing:0.600px;">Feed Monitor</div>
<div class="t" style="left:59.40px;top:243.00px;font-size:17.92px;line-height:20px;color:#1c2812;font-weight:400;letter-spacing:0.341px;">Sentiment Analysis</div>
<div class="t" style="left:60.40px;top:292.00px;font-size:17.92px;line-height:20px;color:#1c2812;font-weight:400;letter-spacing:0.140px;">Topics</div>
<div class="t" style="left:60.40px;top:341.00px;font-size:17.92px;line-height:20px;color:#1c2812;font-weight:400;letter-spacing:0.100px;">Analysts</div>
<div class="t" style="left:27.40px;top:417.00px;font-size:15.36px;line-height:17px;color:#5b6a55;font-weight:400;-webkit-text-stroke:0.43px currentColor;letter-spacing:0.650px;">Documents</div>
<div class="t" style="left:59.80px;top:459.00px;font-size:17.92px;line-height:20px;color:#1c2812;font-weight:400;letter-spacing:0.045px;">Data Sources</div>
<div class="t" style="left:59.80px;top:507.00px;font-size:17.92px;line-height:20px;color:#1c2812;font-weight:400;letter-spacing:0.217px;">Reports</div>
<div class="t" style="left:60.80px;top:557.00px;font-size:17.92px;line-height:20px;color:#1c2812;font-weight:400;letter-spacing:0.260px;">AI Insights</div>
<div class="t" style="left:59.80px;top:605.00px;font-size:17.92px;line-height:20px;color:#5b6a55;font-weight:400;letter-spacing:1.400px;">More</div>
<div class="t" style="left:59.40px;top:705.00px;font-size:17.92px;line-height:20px;color:#1c2812;font-weight:400;letter-spacing:0.486px;">Settings</div>
<div class="t" style="left:59.40px;top:754.00px;font-size:17.92px;line-height:20px;color:#1c2812;font-weight:400;letter-spacing:0.457px;">Get Help</div>
<div class="t" style="left:59.40px;top:803.00px;font-size:17.92px;line-height:20px;color:#1c2812;font-weight:400;letter-spacing:-0.200px;">Search</div>
<div class="t" style="left:35.20px;top:878.00px;font-size:17.92px;line-height:20px;color:#555a52;font-weight:400;letter-spacing:0.800px;">CN</div>
<div class="t" style="left:81.00px;top:866.00px;font-size:17.92px;line-height:20px;color:#131b0a;font-weight:400;-webkit-text-stroke:0.50px currentColor;letter-spacing:0.700px;">Mr. Grower</div>
<div class="t" style="left:81.00px;top:891.00px;font-size:15.36px;line-height:17px;color:#5b6a55;font-weight:400;letter-spacing:0.660px;">mr@grwrr.id</div>
<div class="t" style="left:493.00px;top:24.00px;font-size:20.48px;line-height:23px;color:#131b0a;font-weight:400;-webkit-text-stroke:0.37px currentColor;letter-spacing:0.724px;">Sentiment Analysis</div>
<div class="t" style="left:449.00px;top:139.00px;font-size:17.92px;line-height:20px;color:#5b6a55;font-weight:400;letter-spacing:0.341px;">Positive Sentiment</div>
<div class="t" style="left:449.00px;top:179.00px;font-size:30.72px;line-height:35px;color:#131b0a;font-weight:400;-webkit-text-stroke:0.86px currentColor;letter-spacing:0.150px;">68.4%</div>
<div class="t" style="left:662.00px;top:143.00px;font-size:15.36px;line-height:17px;color:#131b0a;font-weight:400;-webkit-text-stroke:0.15px currentColor;letter-spacing:0.050px;">+5.2%</div>
<div class="t" style="left:449.00px;top:253.00px;font-size:17.92px;line-height:20px;color:#131b0a;font-weight:400;-webkit-text-stroke:0.50px currentColor;letter-spacing:0.726px;">Rising positive mentions</div>
<div class="t" style="left:450.00px;top:288.00px;font-size:17.92px;line-height:20px;color:#5b6a55;font-weight:400;letter-spacing:0.346px;">Across all monitored channels</div>
<div class="t" style="left:807.00px;top:139.00px;font-size:17.92px;line-height:20px;color:#5b6a55;font-weight:400;letter-spacing:0.500px;">Negative Sentiment</div>
<div class="t" style="left:806.00px;top:179.00px;font-size:30.72px;line-height:35px;color:#131b0a;font-weight:400;-webkit-text-stroke:0.86px currentColor;letter-spacing:0.325px;">18.2%</div>
<div class="t" style="left:1026.00px;top:143.00px;font-size:15.36px;line-height:17px;color:#131b0a;font-weight:400;-webkit-text-stroke:0.15px currentColor;letter-spacing:-0.550px;">-3.1%</div>
<div class="t" style="left:807.00px;top:253.00px;font-size:17.92px;line-height:20px;color:#131b0a;font-weight:400;-webkit-text-stroke:0.50px currentColor;letter-spacing:0.662px;">Negative feedback</div>
<div class="t" style="left:807.00px;top:288.00px;font-size:17.92px;line-height:20px;color:#5b6a55;font-weight:400;letter-spacing:0.422px;">Improvements in response</div>
<div class="t" style="left:1165.00px;top:139.00px;font-size:17.92px;line-height:20px;color:#5b6a55;font-weight:400;letter-spacing:0.585px;">Total Mentions</div>
<div class="t" style="left:1164.00px;top:179.00px;font-size:30.72px;line-height:35px;color:#131b0a;font-weight:400;-webkit-text-stroke:0.86px currentColor;letter-spacing:0.920px;">24,819</div>
<div class="t" style="left:1370.00px;top:143.00px;font-size:15.36px;line-height:17px;color:#131b0a;font-weight:400;-webkit-text-stroke:0.15px currentColor;letter-spacing:-0.100px;">+12.5%</div>
<div class="t" style="left:1164.00px;top:253.00px;font-size:17.92px;line-height:20px;color:#131b0a;font-weight:400;-webkit-text-stroke:0.50px currentColor;letter-spacing:0.650px;">Brand reach expanding</div>
<div class="t" style="left:1165.00px;top:288.00px;font-size:17.92px;line-height:20px;color:#5b6a55;font-weight:400;letter-spacing:0.120px;">Across 9 data sources</div>
<div class="t" style="left:1522.00px;top:139.00px;font-size:17.92px;line-height:20px;color:#5b6a55;font-weight:400;letter-spacing:0.343px;">Sentiment Score</div>
<div class="t" style="left:1522.00px;top:179.00px;font-size:30.72px;line-height:35px;color:#131b0a;font-weight:400;-webkit-text-stroke:0.86px currentColor;letter-spacing:1.143px;">7.8 / 10</div>
<div class="t" style="left:1747.80px;top:143.00px;font-size:15.36px;line-height:17px;color:#131b0a;font-weight:400;-webkit-text-stroke:0.15px currentColor;letter-spacing:0.400px;">+0.6</div>
<div class="t" style="left:1523.00px;top:253.00px;font-size:17.92px;line-height:20px;color:#131b0a;font-weight:400;-webkit-text-stroke:0.50px currentColor;letter-spacing:0.746px;">Overall brand health strong</div>
<div class="t" style="left:1522.00px;top:288.00px;font-size:17.92px;line-height:20px;color:#5b6a55;font-weight:400;letter-spacing:0.130px;">Exceeds industry average</div>
<div class="t" style="left:449.70px;top:408.00px;font-size:20.48px;line-height:23px;color:#131b0a;font-weight:400;-webkit-text-stroke:0.57px currentColor;letter-spacing:0.786px;">Sentiment Trend</div>
<div class="t" style="left:449.00px;top:446.00px;font-size:17.92px;line-height:20px;color:#5b6a55;font-weight:400;letter-spacing:0.352px;">Positive vs. negative mentions over the last 3 months</div>
<div class="t" style="left:1362.20px;top:425.00px;font-size:17.92px;line-height:20px;color:#131b0a;font-weight:400;-webkit-text-stroke:0.50px currentColor;letter-spacing:0.600px;">Last 3 months</div>
<div class="t" style="left:1526.50px;top:425.00px;font-size:17.92px;line-height:20px;color:#131b0a;font-weight:400;-webkit-text-stroke:0.50px currentColor;letter-spacing:0.227px;">Last 30 days</div>
<div class="t" style="left:1675.00px;top:425.00px;font-size:17.92px;line-height:20px;color:#131b0a;font-weight:400;-webkit-text-stroke:0.50px currentColor;letter-spacing:0.200px;">Last 7 days</div>
<div class="t" style="left:482.07px;top:840.00px;font-size:15.36px;line-height:17px;color:#5b6a55;font-weight:400;letter-spacing:0.350px;">Apr 4</div>
<div class="t" style="left:566.15px;top:840.00px;font-size:15.36px;line-height:17px;color:#5b6a55;font-weight:400;letter-spacing:0.460px;">Apr 10</div>
<div class="t" style="left:669.69px;top:840.00px;font-size:15.36px;line-height:17px;color:#5b6a55;font-weight:400;letter-spacing:0.360px;">Apr 17</div>
<div class="t" style="left:772.88px;top:840.00px;font-size:15.36px;line-height:17px;color:#5b6a55;font-weight:400;letter-spacing:0.400px;">Apr 24</div>
<div class="t" style="left:877.52px;top:840.00px;font-size:15.36px;line-height:17px;color:#5b6a55;font-weight:400;letter-spacing:0.575px;">May 1</div>
<div class="t" style="left:966.05px;top:840.00px;font-size:15.36px;line-height:17px;color:#5b6a55;font-weight:400;letter-spacing:0.575px;">May 7</div>
<div class="t" style="left:1064.59px;top:840.00px;font-size:15.36px;line-height:17px;color:#5b6a55;font-weight:400;letter-spacing:0.560px;">May 14</div>
<div class="t" style="left:1168.43px;top:840.00px;font-size:15.36px;line-height:17px;color:#5b6a55;font-weight:400;letter-spacing:0.340px;">May 21</div>
<div class="t" style="left:1271.32px;top:840.00px;font-size:15.36px;line-height:17px;color:#5b6a55;font-weight:400;letter-spacing:0.500px;">May 28</div>
<div class="t" style="left:1368.20px;top:840.00px;font-size:15.36px;line-height:17px;color:#5b6a55;font-weight:400;letter-spacing:-0.050px;">Jun 3</div>
<div class="t" style="left:1456.73px;top:840.00px;font-size:15.36px;line-height:17px;color:#5b6a55;font-weight:400;letter-spacing:-0.050px;">Jun 9</div>
<div class="t" style="left:1541.12px;top:840.00px;font-size:15.36px;line-height:17px;color:#5b6a55;font-weight:400;letter-spacing:-0.180px;">Jun 15</div>
<div class="t" style="left:1644.41px;top:840.00px;font-size:15.36px;line-height:17px;color:#5b6a55;font-weight:400;letter-spacing:-0.180px;">Jun 22</div>
<div class="t" style="left:1746.20px;top:840.00px;font-size:15.36px;line-height:17px;color:#5b6a55;font-weight:400;letter-spacing:-0.180px;">Jun 30</div>
</body></html>
